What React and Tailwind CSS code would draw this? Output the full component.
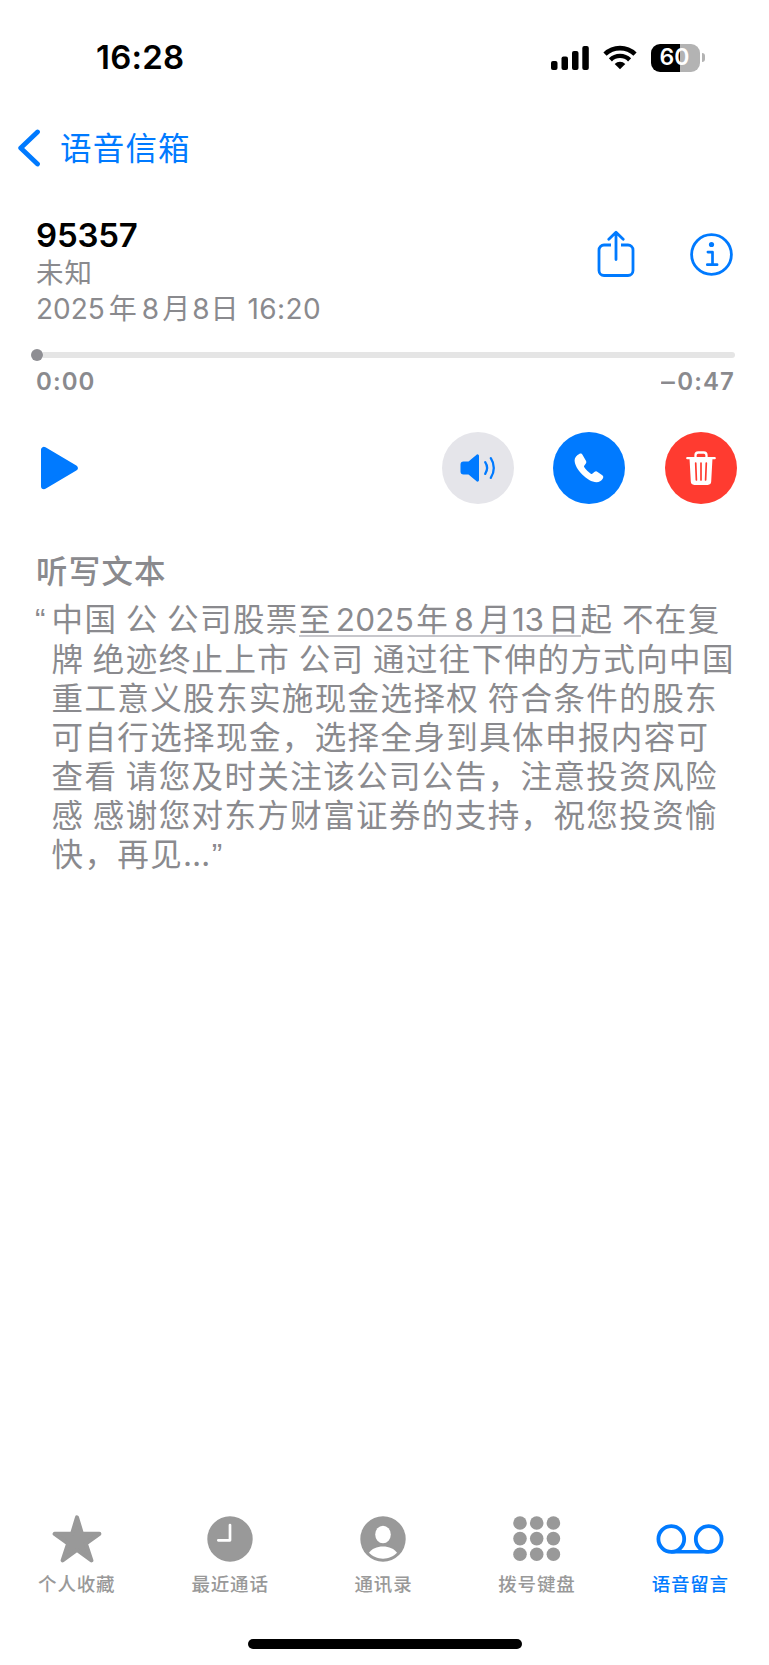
const transcript = [
  "牌 绝迹终止上市 公司 通过往下伸的方式向中国",
  "重工意义股东实施现金选择权 符合条件的股东",
  "可自行选择现金，选择全身到具体申报内容可",
  "查看 请您及时关注该公司公告，注意投资风险",
  "感 感谢您对东方财富证券的支持，祝您投资愉",
];

function StatusBar() {
  return (
    <header className="flex h-[115px] items-center justify-between pl-[96px] pr-[64px]">
      <span className="text-[33px] font-semibold leading-none tracking-[0.2px] text-black">16:28</span>
      <div className="flex items-center">
        <svg width="38" height="24" viewBox="0 0 38 24" className="mr-[14px]">
          <rect x="0" y="15" width="6.5" height="9" rx="2" />
          <rect x="10.5" y="10.5" width="6.5" height="13.5" rx="2" />
          <rect x="21" y="5" width="6.5" height="19" rx="2" />
          <rect x="31.3" y="0" width="6.5" height="24" rx="2" />
        </svg>
        <svg width="34" height="25" viewBox="0 0 34 25" className="mr-[14px]" fill="none" stroke="#000">
          <path d="M2 9.2a21.5 21.5 0 0 1 30 0" strokeWidth="4.6" />
          <path d="M7.4 14.8a13.8 13.8 0 0 1 19.2 0" strokeWidth="4.4" />
          <path d="M17 24.3l-5.3-5.3a7.6 7.6 0 0 1 10.6 0z" fill="#000" stroke="none" />
        </svg>
        <div className="flex h-[28px] w-[49px] items-center justify-center rounded-[9px] bg-[linear-gradient(to_right,#000_60%,#b3b3b3_60%)]">
          <span className="-ml-[2px] text-[23px] font-semibold leading-none text-white">60</span>
        </div>
        <div className="ml-[2px] h-[9px] w-[3px] rounded-r-full bg-[#b3b3b3]" />
      </div>
    </header>
  );
}

function NavBar() {
  return (
    <nav className="flex h-[66px] items-center pl-[17px] text-[#007aff]">
      <svg width="24" height="38" viewBox="0 0 24 38" fill="none" stroke="currentColor" strokeWidth="4.8" strokeLinecap="round" strokeLinejoin="round">
        <path d="M20.5 3L3.7 19l16.8 16" />
      </svg>
      <span className="ml-[19px] pt-[1px] text-[31.5px] leading-none tracking-[1.2px]">语音信箱</span>
    </nav>
  );
}

function CallInfo() {
  return (
    <section className="flex h-[171px] justify-between pl-[36px] pr-[36px] pt-[36px]">
      <div className="flex flex-col whitespace-nowrap text-[#8a8a8e]">
        <h1 className="h-[38px] text-[33px] font-semibold leading-[37px] tracking-[-0.2px] text-black">95357</h1>
        <p className="h-[36px] text-[27.5px] leading-[36px] tracking-[1px]">未知</p>
        <p className="h-[36px] text-[28px] leading-[36px]">
          2025<span className="ml-[4px] mr-[5px]">年</span>8<span className="ml-[3px] mr-[2px]">月</span>8<span className="ml-[1px] mr-[1px]">日</span> <span className="tracking-[0.4px]">16:20</span>
        </p>
      </div>
      <div className="flex pt-[13px] text-[#007aff]">
        <svg width="38" height="48" viewBox="0 0 38 48" className="mr-[55.5px]" fill="none" stroke="currentColor" strokeWidth="2.8" strokeLinecap="round" strokeLinejoin="round">
          <path d="M19 29.5V2.5M11.8 9.3L19 2.2l7.2 7.1" />
          <path strokeLinecap="butt" d="M14 15H7a5 5 0 0 0-5 5v20.5a5 5 0 0 0 5 5h24a5 5 0 0 0 5-5V20a5 5 0 0 0-5-5h-7" />
        </svg>
        <svg width="43" height="43" viewBox="0 0 43 43" className="mt-[3px]" fill="none" stroke="currentColor" strokeWidth="2.8" strokeLinecap="round" strokeLinejoin="round">
          <circle cx="21.5" cy="21.5" r="19.9" />
          <circle cx="21.5" cy="11.5" r="2.6" fill="currentColor" stroke="none" />
          <path strokeWidth="2.7" d="M17.9 19.1h4.6v12.6M17.3 31.7h9.8" />
        </svg>
      </div>
    </section>
  );
}

function Progress() {
  return (
    <section className="h-[80px] pl-[31px] pr-[34px]">
      <div className="flex h-[6px] items-center">
        <div className="h-[12px] w-[12px] shrink-0 rounded-full bg-[#8e8e93]" />
        <div className="h-[6px] flex-1 rounded-r-full bg-[#e5e5e5]" />
      </div>
      <div className="mt-[9px] flex justify-between pl-[5px] text-[24px] font-semibold leading-[29px] tracking-[1.1px] text-[#8a8a8e]">
        <span>0:00</span>
        <span><span className="mr-[1px] inline-block origin-right scale-x-[1.15]">–</span>0:47</span>
      </div>
    </section>
  );
}

function Controls() {
  return (
    <section className="flex h-[72px] items-center pl-[41px] pr-[32.5px]">
      <svg width="37" height="44" viewBox="0 0 37 44" fill="#007aff" stroke="#007aff" strokeWidth="6" strokeLinejoin="round">
        <path d="M3 3.8v36.4L33.8 22z" />
      </svg>
      <div className="ml-auto flex gap-[39.2px]">
        <button className="flex size-[72px] items-center justify-center rounded-full bg-[#e5e5ea]">
          <svg width="36" height="28" viewBox="0 0 36 28" fill="none" stroke="#007aff" strokeWidth="2.3" strokeLinecap="round">
            <path d="M3.5 7.5h5L16.3 1a1.5 1.5 0 0 1 2.7 1v24a1.5 1.5 0 0 1-2.7 1l-7.8-6.5h-5a3 3 0 0 1-3-3v-7a3 3 0 0 1 3-3z" fill="#007aff" stroke="none" />
            <path d="M25.2 8.2a10.5 10.5 0 0 1 0 11.6M30.8 4.2a17.5 17.5 0 0 1 0 19.6" />
          </svg>
        </button>
        <button className="flex size-[72px] items-center justify-center rounded-full bg-[#007aff]">
          <svg width="30" height="30" viewBox="0 0 30 30" className="mr-[1px]" fill="#fff">
            <path d="M5.3.9C3 2 .6 4.3.6 7.3c0 4.4 3.2 9.9 7.6 14.2 4.4 4.3 9.6 7.7 14.3 7.7 2.7 0 4.8-1.3 6.2-3.5.9-1.3.8-2.5-.4-3.4l-4.7-3.4c-1.2-.8-2.3-.7-3.3.2l-1.7 1.5c-.6.5-1.1.5-1.8.1-2.5-1.6-5-4.1-6.5-6.4-.4-.7-.4-1.2.1-1.8l1.3-1.7c.8-1.1.8-2 .1-3.2L8.6 2C7.8.7 6.7.2 5.3.9z" />
          </svg>
        </button>
        <button className="flex size-[72px] items-center justify-center rounded-full bg-[#ff3b30]">
          <svg width="30" height="36" viewBox="0 0 30 36" fill="none" stroke="#fff" strokeLinecap="round" strokeLinejoin="round">
            <path d="M1.3 8.2h27.4M9.5 8V5.2a2.7 2.7 0 0 1 2.7-2.7h5.6a2.7 2.7 0 0 1 2.7 2.7V8" strokeWidth="2.3" />
            <path d="M3.5 8h23l-1.3 23.6a3.5 3.5 0 0 1-3.5 3.3H8.3a3.5 3.5 0 0 1-3.5-3.3z" fill="#fff" stroke="none" />
            <path d="M9.7 13l.7 17M15 13v17M20.3 13l-.7 17" stroke="#ff3b30" strokeWidth="1.7" />
          </svg>
        </button>
      </div>
    </section>
  );
}

function Transcript() {
  return (
    <section className="h-[1011px] shrink-0 whitespace-nowrap pl-[36px] pt-[48px] text-[31.5px] text-[#8a8a8e]">
      <h2 className="h-[48px] font-medium leading-[40px] tracking-[1.2px]">听写文本</h2>
      <p className="pl-[15.5px] leading-[39.05px] tracking-[1.4px] [word-spacing:-1.8px]">
        <span className="-ml-[16.5px] inline-block w-[16.5px] font-['Liberation_Sans']">“</span>
        中国 公 公司股票
        <span className="bg-[linear-gradient(#c7c7cc,#c7c7cc)] bg-[length:100%_2px] bg-[position:0_35px] bg-no-repeat">
          至<span className="ml-[4px] mr-[2px] tracking-[0.3px]">2025</span>年<span className="ml-[5px] mr-[4px]">8</span>月<span className="mr-[4px] tracking-[-0.3px]">13</span>日
        </span>
        起 不在复
        {transcript.map((line) => (
          <span key={line} className="block">{line}</span>
        ))}
        <span className="block">快，再见…<span className="font-['Liberation_Sans']">”</span></span>
      </p>
    </section>
  );
}

const dots = [0, 1, 2].flatMap((row) => [0, 1, 2].map((col) => ({ cx: 7 + col * 16.7, cy: 7 + row * 15.6 })));

const tabs = [
  {
    label: "个人收藏",
    icon: (
      <svg width="50" height="48" viewBox="0 0 50 48" fill="currentColor" stroke="currentColor" strokeWidth="4" strokeLinejoin="round">
        <path d="M25 2.4L30 18.8H47.4L33.8 28.5L39.4 45.4L25 35L10.6 45.4L16.2 28.5L2.6 18.8H20Z" />
      </svg>
    ),
  },
  {
    label: "最近通话",
    icon: (
      <svg width="46" height="46" viewBox="0 0 46 46" fill="none">
        <circle cx="23" cy="23" r="22.7" fill="currentColor" />
        <path d="M23 9v15.3H11.3" stroke="#fff" strokeWidth="2.7" strokeLinecap="round" strokeLinejoin="round" />
      </svg>
    ),
  },
  {
    label: "通讯录",
    icon: (
      <svg width="46" height="46" viewBox="0 0 46 46" fill="#fff">
        <circle cx="23" cy="23" r="22.7" fill="currentColor" />
        <ellipse cx="23" cy="18.5" rx="7.8" ry="8.7" />
        <path d="M9 36.8c2.5-4 8-6.3 14-6.3s11.5 2.3 14 6.3c-3.5 3.7-8.5 5.9-14 5.9s-10.5-2.2-14-5.9z" />
      </svg>
    ),
  },
  {
    label: "拨号键盘",
    icon: (
      <svg width="48" height="46" viewBox="0 0 48 46" fill="currentColor">
        {dots.map((d) => (
          <circle key={`${d.cx}-${d.cy}`} cx={d.cx} cy={d.cy} r="6.8" />
        ))}
      </svg>
    ),
  },
  {
    label: "语音留言",
    active: true,
    icon: (
      <svg width="68" height="30" viewBox="0 0 68 30" fill="none" stroke="currentColor" strokeWidth="3.8">
        <circle cx="15.3" cy="15" r="12.9" />
        <circle cx="52.7" cy="15" r="12.9" />
        <path d="M15.3 27.8h37.4" strokeWidth="3.6" />
      </svg>
    ),
  },
];

function TabBar() {
  return (
    <footer className="mr-[2px] grid grid-cols-5">
      {tabs.map((tab) => (
        <div key={tab.label} className={tab.active ? "flex flex-col items-center text-[#007aff]" : "flex flex-col items-center text-[#999999]"}>
          <div className="flex h-[48px] items-center">{tab.icon}</div>
          <span className="mt-[9px] text-[18.5px] font-medium leading-[24px] tracking-[0.8px]">{tab.label}</span>
        </div>
      ))}
    </footer>
  );
}

export default function App() {
  return (
    <main lang="zh-CN" className="flex h-[1665px] w-[769px] flex-col overflow-hidden bg-white font-['Inter','Noto_Sans_CJK_SC',sans-serif]">
      <StatusBar />
      <NavBar />
      <CallInfo />
      <Progress />
      <Controls />
      <Transcript />
      <TabBar />
      <div className="mx-auto mt-[43px] h-[10px] w-[274px] shrink-0 rounded-full bg-black" />
    </main>
  );
}
